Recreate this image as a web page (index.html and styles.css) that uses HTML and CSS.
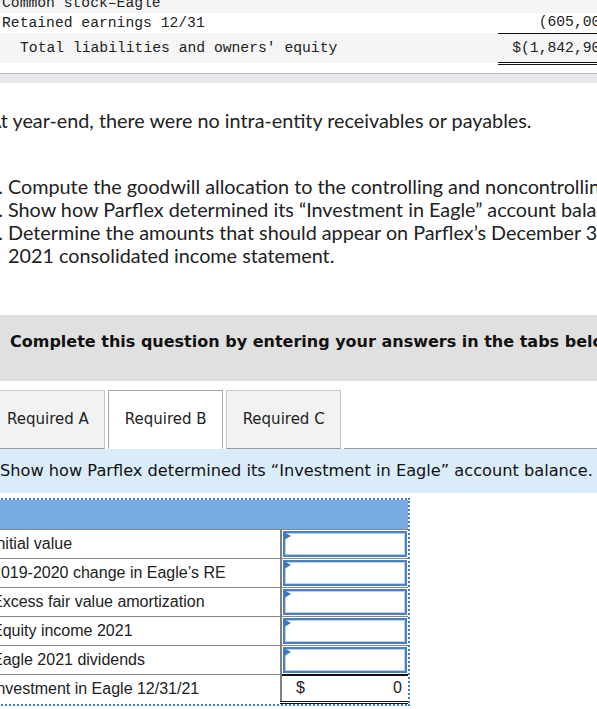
FILE: index.html
```html
<!DOCTYPE html>
<html>
<head>
<meta charset="utf-8">
<link rel="stylesheet" href="styles.css">
</head>
<body>
<div class="page">
  <table class="bs">
    <tr class="shade"><td class="lbl">Common stock–Eagle</td><td class="amt"></td></tr>
    <tr><td class="lbl">Retained earnings 12/31</td><td class="amt single">(605,000)</td></tr>
    <tr class="shade total"><td class="lbl indent">Total liabilities and owners' equity</td><td class="amt double">$(1,842,900)</td></tr>
  </table>
  <div class="scrollbar"></div>

  <p class="para">At year-end, there were no intra-entity receivables or payables.</p>

  <ol class="reqs">
    <li>Compute the goodwill allocation to the controlling and noncontrolling interests.</li>
    <li>Show how Parflex determined its “Investment in Eagle” account balance.</li>
    <li>Determine the amounts that should appear on Parflex’s December 31,<br>2021 consolidated income statement.</li>
  </ol>

  <div class="notice">Complete this question by entering your answers in the tabs below.</div>

  <div class="tabs">
    <div class="tab">Required A</div>
    <div class="tab active">Required B</div>
    <div class="tab">Required C</div>
    <div class="tab-rest"></div>
  </div>
  <div class="prompt">Show how Parflex determined its “Investment in Eagle” account balance.</div>

  <div class="grid-wrap">
    <table class="grid">
      <tr class="head"><th></th><th></th></tr>
      <tr><td class="desc">Initial value</td><td class="inp"><div class="box"></div></td></tr>
      <tr><td class="desc">2019-2020 change in Eagle’s RE</td><td class="inp"><div class="box"></div></td></tr>
      <tr><td class="desc">Excess fair value amortization</td><td class="inp"><div class="box"></div></td></tr>
      <tr><td class="desc">Equity income 2021</td><td class="inp"><div class="box"></div></td></tr>
      <tr><td class="desc">Eagle 2021 dividends</td><td class="inp"><div class="box"></div></td></tr>
      <tr class="last"><td class="desc">Investment in Eagle 12/31/21</td><td class="sum"><div class="sum-in"><span>$</span><span>0</span></div></td></tr>
    </table>
  </div>
</div>
</body>
</html>
```

FILE: styles.css
```css
html, body {
  margin: 0;
  padding: 0;
  background: #fff;
  overflow: hidden;
}
body {
  width: 597px;
  height: 709px;
}
.page {
  margin-left: -10px;
  width: 760px;
  color: #222;
}

/* balance sheet fragment */
.bs {
  border-collapse: collapse;
  margin-top: -7px;
  width: 632px;
  font-family: "Liberation Mono", monospace;
  font-size: 14.7px;
  color: #222;
}
.bs td {
  padding: 0;
  line-height: 20px;
  height: 20px;
  white-space: nowrap;
}
.bs .shade td { background: #f5f5f5; }
.bs .lbl { padding-left: 12px; }
.bs .lbl.indent { padding-left: 30px; }
.bs .amt {
  width: 120px;
  text-align: right;
  padding-right: 4px;
}
.bs .single { border-bottom: 1px solid #111; line-height: 19px; height: 19px; }
.bs .total td { padding-top: 4px; padding-bottom: 4px; }
.bs .double { border-bottom: 3px double #111; }
.scrollbar {
  margin-top: 8px;
  height: 9px;
  border-top: 1px solid #b4b6bb;
  background: #e8e9ed;
}

/* question text */
.para {
  margin: 26px 0 0 -2px;
  font-family: "Lato", sans-serif;
  font-size: 19.8px;
  line-height: 23px;
  color: #222;
  white-space: nowrap;
}
.reqs {
  margin: 43px 0 0 0;
  padding-left: 18px;
  list-style: lower-alpha;
  font-family: "Lato", sans-serif;
  font-size: 19.8px;
  line-height: 23px;
  color: #222;
  white-space: nowrap;
}

/* notice bar */
.notice {
  margin-top: 48px;
  background: #e0e0e0;
  padding: 17px 20px 29px;
  line-height: 20px;
  font-family: "DejaVu Sans", sans-serif;
  font-weight: bold;
  font-size: 16px;
  color: #111;
  white-space: nowrap;
}

/* tabs */
.tabs {
  display: flex;
  align-items: flex-end;
  margin-top: 9px;
  gap: 3px;
}
.tab {
  height: 59px;
  box-sizing: border-box;
  padding: 0 15px 0 16px;
  display: flex;
  align-items: center;
  background: #f2f2f2;
  border: 1px solid #c8c8c8;
  border-bottom: 1px solid #999;
  font-family: "DejaVu Sans", sans-serif;
  font-size: 15px;
  color: #222;
}
.tab.active {
  background: #fff;
  border-color: #a5a5a5;
  border-bottom: 1px solid #fff;
}
.tab-rest {
  flex: 1;
  border-bottom: 1px solid #999;
}
.prompt {
  background: #daecf9;
  height: 44px;
  line-height: 44px;
  padding-left: 10px;
  font-family: "DejaVu Sans", sans-serif;
  font-size: 16.2px;
  color: #111;
  white-space: nowrap;
}

/* answer grid */
.grid-wrap {
  margin-top: 5px;
  width: 418px;
  border: 2px dotted #3d79c2;
  border-left: none;
}
.grid {
  border-collapse: collapse;
  width: 418px;
  font-family: "Liberation Sans", Arial, sans-serif;
  font-size: 16px;
  color: #222;
}
.grid .head th {
  background: #78abe2;
  height: 29px;
  padding: 0;
}
.grid td {
  height: 28px;
  box-sizing: border-box;
  padding: 0;
  border-top: 1px solid #888;
}
.grid .desc {
  padding-left: 2px;
  width: 291px;
  border-right: 2px solid #808080;
}
.grid .inp {
  padding: 1px;
}
.box {
  box-sizing: border-box;
  height: 26px;
  border: 2px solid #4c7fbe;
  box-shadow: inset 0 0 0 1px #b9d2ee;
  position: relative;
  background: #fff;
}
.box::before {
  content: "";
  position: absolute;
  left: -1px;
  top: -1px;
  border-left: 7px solid #3c78c2;
  border-top: 4px solid transparent;
  border-bottom: 4px solid transparent;
}
.grid .sum {
  border-top: 2px solid #111;
  border-bottom: 3px double #111;
  padding: 0;
}
.sum-in {
  display: flex;
  justify-content: space-between;
  align-items: center;
  padding: 0 6px 0 14px;
}
```
